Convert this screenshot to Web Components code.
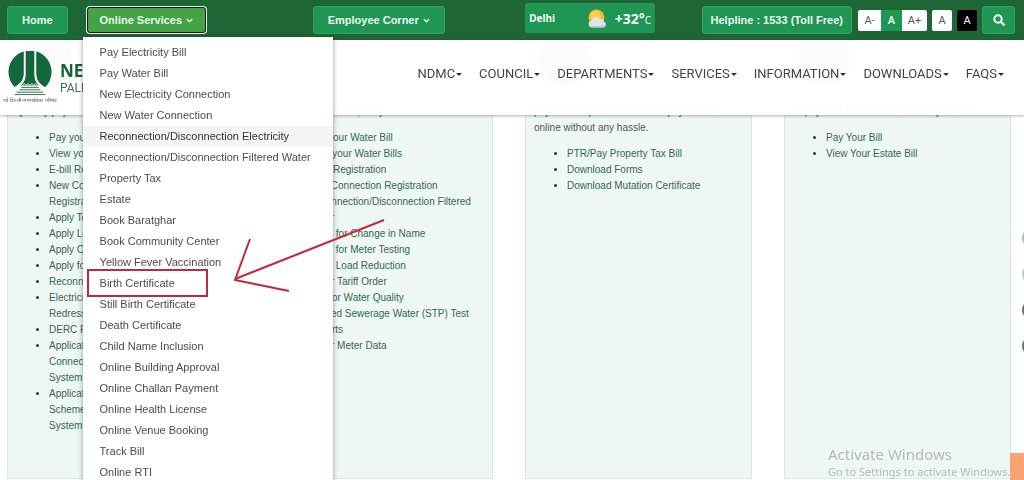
<!DOCTYPE html>
<html lang="en">
<head>
<meta charset="utf-8">
<title>NDMC Online Services</title>
<style>
  body { margin: 0; background: #fff; overflow: hidden; font-family: "Liberation Sans", Arial, sans-serif; font-size: 12px; color: #444; }
</style>
</head>
<body>
<ndmc-page></ndmc-page>

<script>
const define = (name, html, setup) => {
  const template = document.createElement('template');
  template.innerHTML = '<style>*, *::before { box-sizing: border-box; } :host([hidden]) { display: none; }</style>' + html;
  customElements.define(name, class extends HTMLElement {
    constructor() {
      super();
      this.attachShadow({ mode: 'open' }).append(template.content.cloneNode(true));
    }
    connectedCallback() { if (setup) setup(this, this.shadowRoot); }
  });
};

/* Green button used in the top bar */
define('bar-button', `
<style>
  :host { display: block; }
  button { display: flex; align-items: center; gap: 4px; height: 28px; padding: 0 14px; border: 1px solid #2aa55c; border-radius: 3px;
    background: #1f9653; color: #e9f7ee; font: 700 11px "Liberation Sans", Arial, sans-serif; white-space: nowrap; cursor: pointer; }
  svg { display: none; width: 7px; height: 5px; }
  :host([caret]) svg { display: block; }
  :host([compact]) button { padding: 0 8px; }
  :host([open]) button { height: 26px; padding: 0 12px; background: #44a345; border: 1px solid #111; box-shadow: 0 0 0 1px #e8f2ea; }
</style>
<button type="button"><slot></slot><svg viewBox="0 0 7 5" aria-hidden="true"><path d="M.8 1 3.5 3.7 6.2 1" fill="none" stroke="currentColor" stroke-width="1.4"/></svg></button>
`);

define('services-menu', `
<style>
  :host { display: block; width: 250px; max-height: calc(100vh - 37px); overflow: hidden; background: #fff; box-shadow: 0 1px 5px rgba(0,0,0,.4); }
  ul { list-style: none; margin: 0; padding: 5px 0; }
  a { display: block; padding: 0 17px; font-size: 11px; line-height: 21px; color: #4b4b4b; text-decoration: none; white-space: nowrap; }
  a.current { background: #f4f4f4; color: #333; }
</style>
<ul></ul>
`, (host, root) => {
  const items = ['Pay Electricity Bill', 'Pay Water Bill', 'New Electricity Connection', 'New Water Connection',
    'Reconnection/Disconnection Electricity', 'Reconnection/Disconnection Filtered Water', 'Property Tax', 'Estate',
    'Book Baratghar', 'Book Community Center', 'Yellow Fever Vaccination', 'Birth Certificate', 'Still Birth Certificate',
    'Death Certificate', 'Child Name Inclusion', 'Online Building Approval', 'Online Challan Payment',
    'Online Health License', 'Online Venue Booking', 'Track Bill', 'Online RTI'];
  root.querySelector('ul').innerHTML = items.map((t, i) => `<li><a href="#"${i === 4 ? ' class="current"' : ''}>${t}</a></li>`).join('');
});

define('weather-badge', `
<style>
  :host { display: flex; align-items: center; width: 130px; height: 30px; padding: 0 4px; margin-bottom: 4px; border-radius: 3px; background: #1f9653; color: #f3fbf5;
    font: 700 10px "Noto Sans", sans-serif; }
  svg { width: 20px; height: 20px; margin: 2px 8px 0 auto; }
  .temp { font-size: 14px; }
  small { font-size: 10px; font-weight: 400; }
</style>
<span>Delhi</span>
<svg viewBox="0 0 20 20" aria-hidden="true">
  <circle cx="9.500" cy="8.500" r="8" fill="#f9b52b"/><circle cx="8.500" cy="7" r="5" fill="#fdd25c"/>
  <path d="M5 18.500a3.600 3.600 0 0 1-.5-7.100 4.500 4.500 0 0 1 7.500-1.400 3.500 3.500 0 0 1 5 2.400 3.200 3.200 0 0 1-1 6.100z" fill="#dfe3ea"/>
  <path d="M5 18.500h11a3.200 3.200 0 0 0 3-3c-3 2-12 2-16.500 1z" fill="#b9c2d4"/>
</svg>
<span class="temp">+32°<small>C</small></span>
`);

define('display-tools', `
<style>
  :host { display: flex; align-items: center; gap: 5px; }
  .sizes { display: flex; border-radius: 2px; overflow: hidden; }
  button { height: 21px; padding: 0; border: 0; width: 20px; background: #fff; color: #555; font: 11px Roboto, sans-serif; cursor: pointer; }
  .sizes button { width: 23px; }
  .sizes .on { width: 21px; background: #1f9653; color: #fff; font-weight: 500; }
  .sizes .up { width: 25px; }
  .theme { border-radius: 2px; }
  .theme.dark { background: #000; color: #fff; }
  .search { width: 33px; height: 28px; border: 1px solid #2aa55c; border-radius: 3px; background: #1f9653; color: #fff; display: grid; place-items: center; }
  svg { width: 12px; height: 12px; }
</style>
<div class="sizes"><button type="button">A-</button><button type="button" class="on">A</button><button type="button" class="up">A+</button></div>
<button type="button" class="theme">A</button>
<button type="button" class="theme dark">A</button>
<button type="button" class="search" aria-label="Search"><svg viewBox="0 0 12 12"><circle cx="5" cy="5" r="3.700" fill="none" stroke="currentColor" stroke-width="2"/><path d="m7.800 7.800 3 3" stroke="currentColor" stroke-width="2.200" stroke-linecap="round"/></svg></button>
`);

define('top-bar', `
<style>
  :host { display: grid; grid-template-columns: 305fr 212fr 176fr auto; align-items: center; height: 40px; padding: 0 9px 0 7px; background: #1f6637; }
  .group { display: flex; align-items: center; gap: 19px; }
  .end { gap: 6px; }
  .drop { position: relative; }
  services-menu { position: absolute; left: -4px; top: 30px; z-index: 2; }
</style>
<div class="group"><bar-button>Home</bar-button><div class="drop"><bar-button caret open>Online Services</bar-button><services-menu></services-menu></div></div>
<bar-button caret>Employee Corner</bar-button>
<weather-badge></weather-badge>
<div class="group end"><bar-button compact>Helpline : 1533 (Toll Free)</bar-button><display-tools></display-tools></div>
`);

define('site-brand', `
<style>
  :host { display: flex; align-items: center; gap: 5px; }
  figure { margin: 0; width: 50px; display: flex; flex-direction: column; align-items: center; }
  svg { width: 46px; height: 46px; }
  figcaption { font-size: 5px; line-height: 9px; color: #555; white-space: nowrap; }
  strong { display: block; font: 700 17px/20px "Open Sans", sans-serif; color: #17603a; }
  span { display: block; font: 12px/14px Roboto, sans-serif; color: #3d6b50; }
  div { white-space: nowrap; }
</style>
<figure>
  <svg viewBox="0 0 46 48" aria-hidden="true">
    <circle cx="23" cy="23" r="22.500" fill="#12683a"/>
    <path d="M16.500 0h13v24c0 8 4 12 10 15v9H6v-9c6-3 10.500-7 10.500-15z" fill="#fff"/>
    <path d="M18.500 1h9v24c0 6 2 9 5 12h-19c3-3 5-6 5-12z" fill="#12683a"/>
    <path d="M14 39h18M12 41.500h22M9 44h28M7 46.500h32" fill="none" stroke="#2b7048" stroke-width="1"/>
    <path d="M15 37l2-2 2 2 2-2 2 2 2-2 2 2 2-2 2 2" fill="none" stroke="#fff"/>
  </svg>
  <figcaption lang="hi">नई दिल्ली नगरपालिका परिषद</figcaption>
</figure>
<div><strong>NEW</strong><span>PALIKA</span></div>
`);

define('main-nav', `
<style>
  :host { display: block; }
  ul { display: flex; gap: 17px; list-style: none; margin: 0; padding: 0; }
  a { display: flex; align-items: center; gap: 1px; font: 13px/20px Roboto, sans-serif; color: #444; text-decoration: none; }
  a::after { content: ""; border: 3px solid transparent; border-top-color: #333; border-bottom: 0; margin-top: 2px; }
</style>
<nav><ul></ul></nav>
`, (host, root) => {
  root.querySelector('ul').innerHTML = ['NDMC', 'COUNCIL', 'DEPARTMENTS', 'SERVICES', 'INFORMATION', 'DOWNLOADS', 'FAQS']
    .map(t => `<li><a href="#">${t}</a></li>`).join('');
});

define('site-header', `
<style>
  :host { display: block; position: fixed; inset: 0 0 auto 0; z-index: 2; }
  .row { display: flex; justify-content: space-between; align-items: center; height: 75px; padding: 0 20px 0 5px; background: rgba(255,255,255,.98); box-shadow: 0 1px 3px rgba(0,0,0,.3); }
  main-nav { margin-bottom: 8px; }
</style>
<top-bar></top-bar>
<div class="row"><site-brand></site-brand><main-nav></main-nav></div>
`);

define('service-card', `
<style>
  :host { display: block; border: 1px solid #dde6e3; background: #eff7f5; padding: 9px 8px; font-size: 10px; line-height: 16px; }
  header { display: flex; align-items: center; height: 52px; padding-left: 5px; margin-bottom: 18px; }
  i { width: 52px; height: 52px; border-radius: 50%; background: #1d6a3a; }
  p { margin: 0 0 10px; white-space: pre-line; color: #555; }
  ul { margin: 0; padding: 0 0 0 33px; }
  li::marker { color: #333; }
  a { color: #2e6b4b; text-decoration: none; white-space: pre-line; }
</style>
<header><i></i></header><p></p><ul></ul>
`, (host, root) => {
  const { text, links } = host.data;
  root.querySelector('p').textContent = text;
  root.querySelector('ul').innerHTML = links.map(t => `<li><a href="#">${t}</a></li>`).join('');
});

define('share-rail', `
<style>
  :host { position: fixed; right: 0; top: 228px; width: 2px; overflow: hidden; display: flex; flex-direction: column; gap: 16px; }
  a { width: 20px; height: 20px; border-radius: 50%; background: var(--c); }
</style>
<a href="#" aria-label="Twitter" style="--c:#8ac4dc"></a><a href="#" aria-label="Mail" style="--c:#c3c6ca"></a><a href="#" aria-label="Share" style="--c:#67746f"></a><a href="#" aria-label="Facebook" style="--c:#4b7f86"></a>
`);

define('activation-notice', `
<style>
  :host { position: fixed; left: calc(100% - 196px); bottom: 0; font-family: "Noto Sans", sans-serif; color: #b4bab9; white-space: nowrap; }
  b { display: block; font-weight: 400; font-size: 15px; line-height: 18px; }
  span { display: block; font-size: 11px; line-height: 17px; }
</style>
<b>Activate Windows</b><span>Go to Settings to activate Windows.</span>
`);

/* Hand-drawn marks pointing at the Birth Certificate entry */
define('pointer-marks', `
<style>
  :host { position: fixed; left: 0; top: 0; z-index: 4; pointer-events: none; }
  svg { display: block; }
</style>
<svg width="400" height="310" aria-hidden="true" fill="none" stroke="#c5283a" stroke-width="2">
  <rect x="88" y="270" width="119" height="26"/>
  <path d="M384 220 235 279M250 239 235 280 289 291"/>
</svg>
`);

define('ndmc-page', `
<style>
  :host { display: block; }
  main { display: grid; grid-template-columns: repeat(4, 1fr); gap: 32px; min-height: 100vh; padding: 24px 13px 1px 7px; }
  main { box-sizing: border-box; }
  .corner { position: fixed; right: 0; bottom: 0; width: 14px; height: 27px; background: #fba274; }
</style>
<site-header></site-header>
<main></main>
<share-rail></share-rail>
<div class="corner"></div>
<activation-notice></activation-notice>
<pointer-marks></pointer-marks>
`, (host, root) => {
  const cards = [
    { text: 'Quickly pay', links: [
      'Pay your Bill', 'View your', 'E-bill Reg', 'New Conn\nRegistration', 'Apply Test', 'Apply Load',
      'Apply Ch', 'Apply for', 'Reconnect', 'Electricity\nRedressal', 'DERC For', 'Application\nConnection\nSystem', 'Application\nScheme\nSystem'] },
    { text: 'Water bill payment, easy.', links: [
      'Pay your Water Bill', 'View your Water Bills', 'E-bill Registration', 'New Connection Registration',
      'Reconnection/Disconnection Filtered\nWater', 'Apply for Change in Name', 'Apply for Meter Testing', 'Apply Load Reduction',
      'Water Tariff Order', 'Test for Water Quality', 'Treated Sewerage Water (STP) Test\nReports', 'Water Meter Data'] },
    { text: 'payment help citizens view or pay their tax\nonline without any hassle.', links: [
      'PTR/Pay Property Tax Bill', 'Download Forms', 'Download Mutation Certificate'] },
    { text: 'or pay their bill online without any hassle.', links: [
      'Pay Your Bill', 'View Your Estate Bill'] }
  ];
  root.querySelector('main').append(...cards.map(data => Object.assign(document.createElement('service-card'), { data })));
});
</script>
</body>
</html>
